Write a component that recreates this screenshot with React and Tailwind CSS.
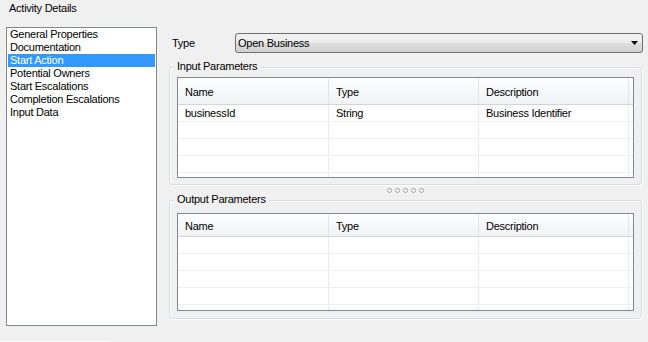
import React from "react";

const items = [
  "General Properties",
  "Documentation",
  "Start Action",
  "Potential Owners",
  "Start Escalations",
  "Completion Escalations",
  "Input Data",
];

function HeaderCell({ children, w }) {
  return (
    <div className={`${w} h-full shrink-0 border-r border-[#e2e4e8] pl-[7px] pt-[2px] flex items-center`}>
      {children}
    </div>
  );
}

function Cell({ children, w }) {
  return (
    <div className={`${w} h-full shrink-0 border-r border-[#e6ecf5] pl-[7px] pt-[1px] flex items-center`}>
      {children}
    </div>
  );
}

function Row({ cells, last }) {
  return (
    <div className={`flex ${last ? "flex-1" : "h-[17px] shrink-0 border-b border-[#f0f0f0]"}`}>
      <Cell w="w-[151px]">{cells[0]}</Cell>
      <Cell w="w-[150px]">{cells[1]}</Cell>
      <Cell w="w-[150px]">{cells[2]}</Cell>
      <div className="flex-1" />
    </div>
  );
}

function Grid({ headerClass, sizeClass, data }) {
  const rows = [0, 1, 2, 3].map((i) => data[i] || ["", "", ""]);
  return (
    <div className={`${sizeClass} border border-[#828790] bg-white flex flex-col overflow-hidden`}>
      <div className={`${headerClass} shrink-0 flex border-b border-[#d5d5d5] bg-[linear-gradient(#ffffff,#f7f8fa_50%,#f1f2f4)]`}>
        <HeaderCell w="w-[151px]">Name</HeaderCell>
        <HeaderCell w="w-[150px]">Type</HeaderCell>
        <HeaderCell w="w-[150px]">Description</HeaderCell>
        <div className="flex-1" />
      </div>
      {rows.map((r, i) => (
        <Row key={i} cells={r} />
      ))}
      <Row cells={["", "", ""]} last />
    </div>
  );
}

function GroupBox({ label, sizeClass, padClass, children }) {
  return (
    <div className={`${sizeClass} ${padClass} relative border border-[#d5dfe5] rounded-[3px] shadow-[inset_1px_1px_0_#ffffff,1px_1px_0_#ffffff]`}>
      <div className="absolute top-[-8px] left-[4px] px-[3px] bg-[#f0f0f0] leading-[13px]">{label}</div>
      {children}
    </div>
  );
}

export default function App() {
  return (
    <div className="relative w-[648px] h-[342px] overflow-hidden bg-[#f0f0f0] text-black text-[11px] leading-[13px] tracking-[-0.25px] font-['Liberation_Sans',Arial,sans-serif]">
      <div className="h-[27px] pl-[9px] pt-[2px]">Activity Details</div>
      <div className="flex">
        <div className="ml-[6px] w-[151px] h-[299px] shrink-0 border border-[#828790] bg-white px-[1px]">
          {items.map((it) => (
            <div
              key={it}
              className={`h-[13px] pl-[2px] whitespace-nowrap ${
                it === "Start Action" ? "bg-[#3399ff] text-white" : ""
              }`}
            >
              {it}
            </div>
          ))}
        </div>
        <div className="ml-[12px] w-[474px] flex flex-col pt-[6px]">
          <div className="flex items-center h-[20px]">
            <div className="w-[66px] pl-[3px]">Type</div>
            <div className="w-[408px] h-[20px] border border-[#707070] rounded-[3px] bg-[linear-gradient(#f2f2f2,#ebebeb_50%,#dddddd_50%,#d2d2d2)] flex items-center justify-between pl-[2px] pr-[4px]">
              <span>Open Business</span>
              <svg width="7" height="4" viewBox="0 0 7 4">
                <path d="M0 0H7L3.5 4Z" fill="#000" />
              </svg>
            </div>
          </div>
          <div className="mt-[14px]">
            <GroupBox label="Input Parameters" sizeClass="w-[473px] h-[118px]" padClass="pt-[9px] pl-[7px]">
              <Grid
                sizeClass="w-[457px] h-[101px]"
                headerClass="h-[27px]"
                data={[["businessId", "String", "Business Identifier"]]}
              />
            </GroupBox>
          </div>
          <div className="w-[473px] h-[15px] flex justify-center gap-[3px] pt-[3px]">
            {[0, 1, 2, 3, 4].map((i) => (
              <div key={i} className="w-[5px] h-[5px] rounded-full border border-[#a8a8a8]" />
            ))}
          </div>
          <GroupBox label="Output Parameters" sizeClass="w-[473px] h-[119px]" padClass="pt-[12px] pl-[7px]">
            <Grid sizeClass="w-[457px] h-[98px]" headerClass="h-[23px]" data={[]} />
          </GroupBox>
        </div>
      </div>
      <div className="absolute bottom-0 left-0 w-[108px] h-[1px] bg-white" />
    </div>
  );
}
